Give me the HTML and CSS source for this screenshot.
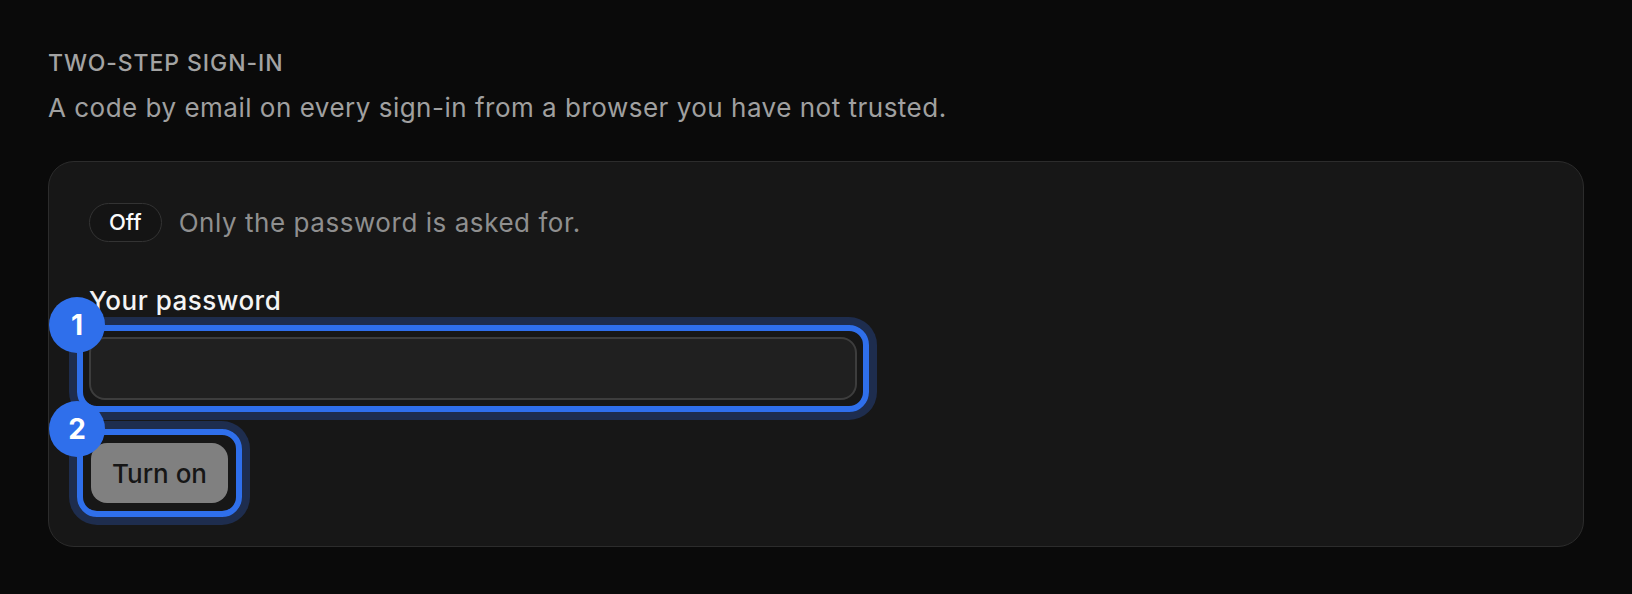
FILE: index.html
```html
<!DOCTYPE html>
<html lang="en">
<head>
    <meta charset="UTF-8">
    <meta name="viewport" content="width=device-width, initial-scale=1.0">
    <title>Two-step sign-in</title>
    <link rel="stylesheet" href="styles.css">
</head>
<body>
    <section class="setting">
        <h2 class="setting-title">Two-step sign-in</h2>
        <p class="setting-desc">A code by email on every sign-in from a browser you have not trusted.</p>

        <div class="card">
            <div class="status">
                <span class="pill">Off</span>
                <span class="status-text">Only the password is asked for.</span>
            </div>

            <label class="field-label" for="password">Your password</label>
            <div class="field">
                <input type="password" id="password" class="text-input">
                <span class="ring"><span class="step">1</span></span>
            </div>

            <div class="action">
                <button class="btn" disabled>Turn on</button>
                <span class="ring ring-btn"><span class="step">2</span></span>
            </div>
        </div>
    </section>
</body>
</html>
```

FILE: styles.css
```css
body {
    margin: 0;
    padding: 47px 48px;
    background-color: #0a0a0a;
    font-family: Inter, "Noto Sans", sans-serif;
    color: #f2f2f2;
}

.setting-title {
    margin: 0 0 10px;
    font-size: 23px;
    line-height: 32px;
    font-weight: 500;
    letter-spacing: 0.04em;
    text-transform: uppercase;
    color: #a3a3a3;
}

.setting-desc {
    margin: 0 0 34px;
    font-size: 26px;
    line-height: 38px;
    letter-spacing: 0.5px;
    color: #a0a0a0;
}

.card {
    display: flex;
    flex-direction: column;
    align-items: flex-start;
    background: #171717;
    border: 1px solid #2c2c2c;
    border-radius: 26px;
    padding: 41px 40px 43px;
}

.status {
    display: flex;
    align-items: center;
    gap: 17px;
}

.pill {
    box-sizing: border-box;
    height: 39px;
    padding: 0 19px;
    border: 1px solid #333;
    border-radius: 20px;
    background: #141414;
    font-size: 22px;
    line-height: 37px;
    font-weight: 500;
    color: #fafafa;
}

.status-text {
    font-size: 26px;
    letter-spacing: 0.55px;
    color: #8f8f8f;
}

.field-label {
    margin: 41px 0 18px;
    font-size: 26px;
    line-height: 36px;
    font-weight: 500;
    letter-spacing: 0.5px;
    color: #f4f4f4;
}

.field {
    position: relative;
    width: 768px;
}

.text-input {
    display: block;
    box-sizing: border-box;
    width: 100%;
    height: 63px;
    padding: 0 18px;
    background: #202020;
    border: 2px solid #3d3d3d;
    border-radius: 16px;
    color: #f2f2f2;
    font-size: 24px;
}

.action {
    position: relative;
    margin: 43px 0 0 2px;
}

.btn {
    display: block;
    height: 60px;
    padding: 0 21px;
    border: none;
    border-radius: 16px;
    background: #808080;
    color: #161616;
    font-family: inherit;
    font-size: 26px;
    font-weight: 500;
}

.ring {
    position: absolute;
    inset: -12px;
    border: 6px solid #2f6feb;
    border-radius: 20px;
    box-shadow: 0 0 0 8px #1e2d4e;
    pointer-events: none;
}

.ring-btn {
    inset: -14px;
}

.step {
    position: absolute;
    left: -34px;
    top: -34px;
    width: 56px;
    height: 56px;
    border-radius: 50%;
    background: #2f6feb;
    color: #fff;
    font-size: 28px;
    font-weight: 700;
    line-height: 56px;
    text-align: center;
}
```
